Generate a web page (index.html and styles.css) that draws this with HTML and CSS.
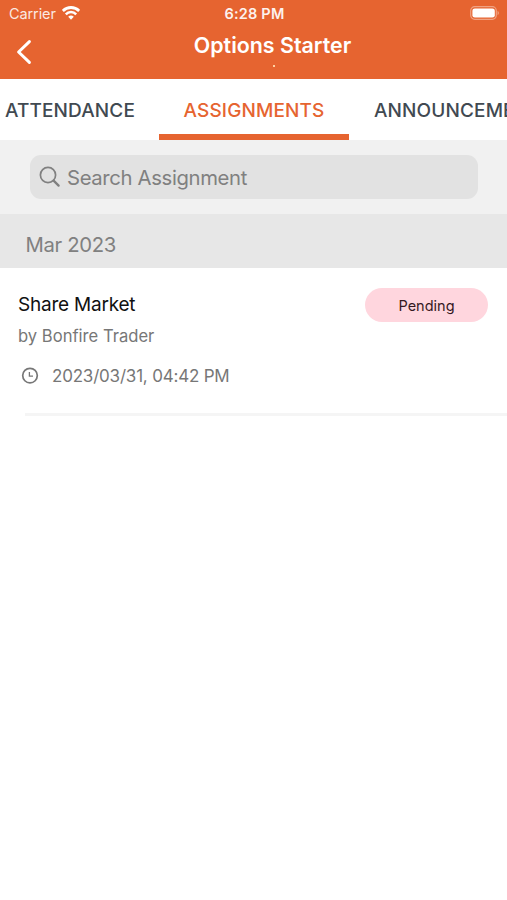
FILE: index.html
```html
<!DOCTYPE html>
<html lang="en">
<head>
<meta charset="utf-8">
<meta name="viewport" content="width=device-width, initial-scale=1">
<title>Options Starter</title>
<link rel="stylesheet" href="styles.css">
</head>
<body>
<header class="header">
  <div class="status">
    <div class="status-left">
      <span class="carrier">Carrier</span>
      <svg class="wifi" viewBox="0 0 18 14" width="18" height="14">
        <path d="M.8 4.9A11.6 11.6 0 0 1 17.2 4.9" fill="none" stroke="#fff" stroke-width="2.8"/>
        <path d="M3.8 8.3A7.3 7.3 0 0 1 14.2 8.3" fill="none" stroke="#fff" stroke-width="2.5"/>
        <path d="M9 13.8L6.2 10.8A4 4 0 0 1 11.8 10.8Z" fill="#fff"/>
      </svg>
    </div>
    <span class="time">6:28 PM</span>
    <svg class="battery" viewBox="0 0 30 14" width="30" height="14">
      <rect x=".7" y=".7" width="25.6" height="12.6" rx="4" fill="none" stroke="#fff" stroke-opacity=".4" stroke-width="1.2"/>
      <rect x="2.4" y="2.4" width="22.4" height="9.2" rx="2.4" fill="#fff"/>
      <path d="M27.6 4.8a2.6 2.6 0 0 1 0 4.4z" fill="#fff" fill-opacity=".45"/>
    </svg>
  </div>
  <div class="nav">
    <svg class="back" viewBox="0 0 16 26" width="16" height="26">
      <path d="M13.4 2.6L2.6 13L13.4 23.4" fill="none" stroke="#fff" stroke-width="3" stroke-linecap="round" stroke-linejoin="round"/>
    </svg>
    <div class="heading">
      <h1 class="title">Options Starter</h1>
      <span class="dot"></span>
    </div>
  </div>
</header>
<nav class="tabs">
  <a class="tab tab-first">ATTENDANCE</a>
  <a class="tab tab-active">ASSIGNMENTS</a>
  <a class="tab tab-last">ANNOUNCEMENTS</a>
</nav>
<div class="search">
  <div class="field">
    <svg viewBox="0 0 22 22" width="22" height="22" fill="none" stroke="#808080" stroke-linecap="round">
      <circle cx="9" cy="9" r="7.6" stroke-width="1.7"/>
      <path d="M14.6 14.6L19.6 19.6" stroke-width="2.3"/>
    </svg>
    <span class="placeholder">Search Assignment</span>
  </div>
</div>
<main>
  <h2 class="month">Mar 2023</h2>
  <article class="item">
    <div class="row">
      <h3 class="name">Share Market</h3>
      <span class="badge">Pending</span>
    </div>
    <p class="author">by Bonfire Trader</p>
    <div class="due">
      <svg viewBox="0 0 18 18" width="18" height="18" fill="none" stroke="#777">
        <circle cx="9" cy="8.6" r="7.3" stroke-width="1.7"/>
        <path d="M8.4 5V9.2H12" stroke-width="1.3"/>
      </svg>
      <span class="date">2023/03/31, 04:42 PM</span>
    </div>
  </article>
</main>
</body>
</html>
```
FILE: styles.css
```css
* { box-sizing: border-box; }
body {
  margin: 0;
  min-height: 900px;
  overflow: hidden;
  background: #fff;
  font-family: Inter, "Liberation Sans", sans-serif;
  white-space: nowrap;
}
h1, h2, h3, p { margin: 0; font-weight: 400; }
svg { display: block; flex: none; }

.header { height: 79px; background: #e66430; color: #fff; }
.status {
  display: grid;
  grid-template-columns: 1fr auto 1fr;
  align-items: center;
  height: 26px;
  padding: 0 7px 0 9px;
}
.status-left { display: flex; align-items: center; gap: 6px; }
.carrier { font-size: 14.5px; letter-spacing: -.1px; opacity: .86; }
.time { font-size: 14.5px; font-weight: 600; letter-spacing: .2px; opacity: .92; }
.battery { justify-self: end; }
.nav {
  display: grid;
  grid-template-columns: 16px 1fr 16px;
  align-items: center;
  height: 52px;
  padding: 0 16px;
}
.heading { display: flex; flex-direction: column; align-items: center; padding: 0 0 6px 41px; }
.title { margin-right: 3px; font-size: 21.4px; line-height: 26px; font-weight: 600; }
.dot { width: 2px; height: 2px; margin-top: 7px; background: #ffd0a0; }

.tabs { display: flex; width: 100%; height: 61px; overflow: hidden; color: #414951; font-size: 19px; font-weight: 500; letter-spacing: .13px; }
.tab { flex: none; height: 61px; line-height: 63px; }
.tab-first { width: 159px; padding-left: 5px; }
.tab-active { width: 190px; text-align: center; color: #e66430; border-bottom: 6px solid #e66430; }
.tab-last { padding-left: 25px; }

.search { height: 74px; padding: 15px 29px 15px 30px; background: #f1f1f1; }
.field {
  display: flex;
  align-items: center;
  gap: 6px;
  height: 44px;
  padding-left: 9px;
  border-radius: 11px;
  background: #e2e2e2;
  color: #808080;
  font-size: 20.3px;
  letter-spacing: -.35px;
}
.placeholder { padding-top: 1px; }
.month { height: 54px; padding-left: 25.6px; background: #e7e7e7; color: #808080; font-size: 20.3px; line-height: 62px; letter-spacing: -.36px; }

.item { height: 148px; padding: 20px 19px 0 18px; position: relative; }
.item::after { content: ""; position: absolute; left: 25px; right: 0; bottom: 0; height: 3px; background: #f5f5f5; }
.row { display: flex; justify-content: space-between; height: 34px; }
.name { color: #111; font-size: 19px; line-height: 33px; letter-spacing: -.22px; }
.badge { width: 123px; height: 34px; border-radius: 17px; background: #ffd6de; color: #35191f; font-size: 14.5px; line-height: 35px; text-align: center; }
.author { color: #777; font-size: 16.6px; line-height: 28px; }
.due { display: flex; align-items: center; gap: 13px; height: 24px; margin-top: 14px; padding-left: 3px; color: #777; font-size: 17px; letter-spacing: -.2px; }
```
